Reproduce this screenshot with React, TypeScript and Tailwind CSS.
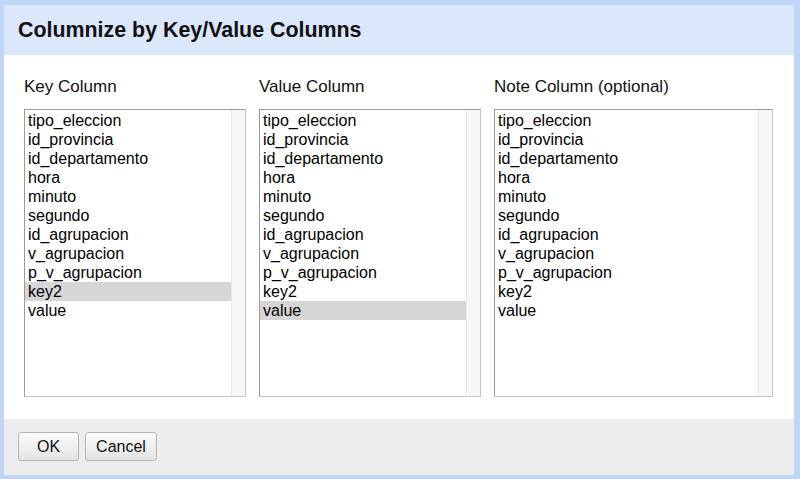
const columns = [
  'tipo_eleccion',
  'id_provincia',
  'id_departamento',
  'hora',
  'minuto',
  'segundo',
  'id_agrupacion',
  'v_agrupacion',
  'p_v_agrupacion',
  'key2',
  'value',
]

const font = { fontFamily: '"Liberation Sans", Arial, sans-serif' }

function ListBox({ width, selected }: { width: string; selected?: string }) {
  return (
    <div className={`flex h-[288px] ${width} border border-[#9a9a9a] border-r-[#c4c4c4] border-b-[#c4c4c4] bg-white`}>
      <div className="flex-1 pt-px">
        {columns.map((c) => (
          <div key={c} className={`h-[19px] pl-[3px] text-[16px] leading-[19px] text-black ${c === selected ? 'bg-[#d6d6d6]' : ''}`}>
            {c}
          </div>
        ))}
      </div>
      <div className="w-[14px] border-l border-[#e8e8e8] bg-[#f7f7f7]" />
    </div>
  )
}

export default function App() {
  return (
    <div className="flex h-[479px] w-[800px] flex-col bg-[#c0d6f9] pt-[5px] pr-[6px] pb-[4px] pl-[4px]" style={font}>
      <div className="flex h-[50px] items-center bg-[#dbe7fb] px-[14px]">
        <h1 className="text-[21.4px] font-bold text-[#111]">Columnize by Key/Value Columns</h1>
      </div>
      <div className="flex h-[364px] gap-[13px] bg-white px-[20px] pt-[22px]">
        <div>
          <div className="mb-[12px] h-[20px] text-[17px] leading-[20px] text-[#111]">Key Column</div>
          <ListBox width="w-[222px]" selected="key2" />
        </div>
        <div>
          <div className="mb-[12px] h-[20px] text-[17px] leading-[20px] text-[#111]">Value Column</div>
          <ListBox width="w-[222px]" selected="value" />
        </div>
        <div>
          <div className="mb-[12px] h-[20px] text-[17px] leading-[20px] text-[#111]">Note Column (optional)</div>
          <ListBox width="w-[279px]" />
        </div>
      </div>
      <div className="flex flex-1 items-start gap-[6px] bg-[#ededed] px-[14px] pt-[13px]">
        <button className="h-[29px] w-[61px] rounded-[3px] border border-[#b5b5b5] bg-gradient-to-b from-[#fbfbfb] to-[#e4e4e4] text-[16px] text-[#111]">OK</button>
        <button className="h-[29px] w-[72px] rounded-[3px] border border-[#b5b5b5] bg-gradient-to-b from-[#fbfbfb] to-[#e4e4e4] text-[16px] text-[#111]">Cancel</button>
      </div>
    </div>
  )
}
